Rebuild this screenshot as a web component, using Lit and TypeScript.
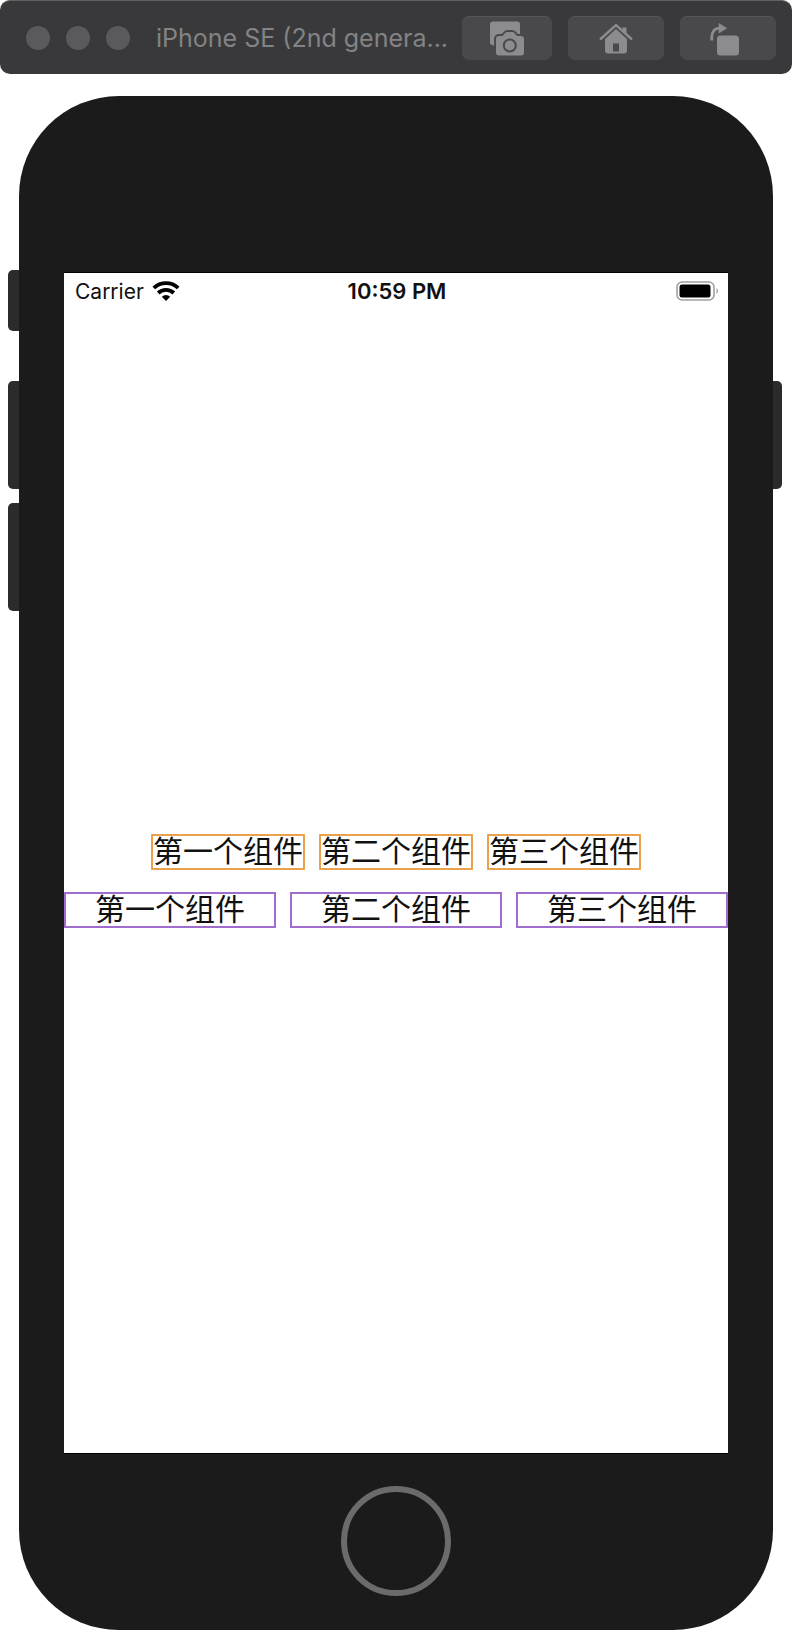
import { LitElement, html, css, svg } from "lit";
import { customElement } from "lit/decorators.js";

const LABELS = ["第一个组件", "第二个组件", "第三个组件"];

const CAMERA_BODY =
  "M10 15h3.500c1.800-1.500 2.400-4 5.300-4h4c2.900 0 3.500 2.500 5.300 4H32a3 3 0 0 1 3 3v13.500a3 3 0 0 1-3 3H10a3 3 0 0 1-3-3V18a3 3 0 0 1 3-3z";

const cameraIcon = svg`
  <svg class="icon" viewBox="0 0 36 36" aria-hidden="true">
    <path d="M4 .5h24a3 3 0 0 1 3 3V16H7v8.500H5.500C2.800 24.500 1 23.500 1 21.500v-18a3 3 0 0 1 3-3z"/>
    <path d=${CAMERA_BODY} stroke="#49494b" stroke-width="4"/>
    <path d=${CAMERA_BODY}/>
    <circle cx="20.800" cy="24.500" r="6" stroke="#49494b" stroke-width="2"/>
  </svg>`;

const homeIcon = svg`
  <svg class="icon" viewBox="0 0 36 36" aria-hidden="true">
    <path d="M24.500 6.500h4v7l-4-3.500z"/>
    <path d="M2 18.500 18 4l16 14.500" fill="none" stroke="currentColor" stroke-width="2.400"/>
    <path fill-rule="evenodd" d="M18 8 29 18v11.500a3 3 0 0 1-3 3H10a3 3 0 0 1-3-3V18zM15 22.500v8h6v-8z"/>
  </svg>`;

const rotateIcon = svg`
  <svg class="icon" viewBox="0 0 36 36" aria-hidden="true">
    <path d="M1.800 19.500C1.300 11 4 7.200 10 7.200" fill="none" stroke="currentColor" stroke-width="2.800"/>
    <path d="M9 2.500 16.700 7.200 9 12z" stroke="currentColor" stroke-width=".6" stroke-linejoin="round"/>
    <rect x="7" y="14.500" width="22" height="20" rx="3.500"/>
  </svg>`;

@customElement("app-root")
export class AppRoot extends LitElement {
  static styles = css`
    :host {
      display: block;
      background: #fff;
      font-family: Inter, "Noto Sans CJK SC", sans-serif;
    }
    .toolbar {
      display: flex;
      align-items: center;
      gap: 16px;
      box-sizing: border-box;
      height: 74px;
      padding: 1px 16px 0 26px;
      border-top: 1px solid #626263;
      border-radius: 10px;
      background: #39393b;
      color: #838385;
    }
    .lights {
      display: flex;
      gap: 16px;
      margin-right: 10px;
    }
    .light {
      width: 24px;
      height: 24px;
      border-radius: 50%;
      background: #5a5a5c;
    }
    .title {
      flex: 1;
      min-width: 0;
      margin: 0;
      font-size: 25px;
      font-weight: 400;
      line-height: 32px;
      white-space: nowrap;
    }
    .tool {
      display: flex;
      align-items: center;
      justify-content: center;
      box-sizing: border-box;
      width: 96px;
      height: 44px;
      padding: 0;
      border: 0;
      border-top: 1px solid #565658;
      border-radius: 7px;
      background: #49494b;
      color: #8c8c8e;
    }
    .tool.narrow {
      width: 90px;
    }
    .icon {
      width: 36px;
      height: 36px;
      fill: currentColor;
    }
    .device {
      display: grid;
      grid-template-columns: 19px 1fr 19px;
      margin-top: 22px;
    }
    .rail {
      display: flex;
      flex-direction: column;
      padding: 174px 0 0 8px;
    }
    .rail.right {
      padding: 285px 10px 0 0;
    }
    .key {
      height: 108px;
      margin-bottom: 14px;
      border-radius: 5px 0 0 5px;
      background: #2b2b2b;
    }
    .key.mute {
      height: 61px;
      margin-bottom: 50px;
    }
    .right .key {
      border-radius: 0 5px 5px 0;
    }
    .body {
      padding: 176px 45px 2px;
      border-radius: 100px;
      background: #1b1b1b;
    }
    .screen {
      display: flex;
      flex-direction: column;
      aspect-ratio: 664 / 1180;
      border: solid #000;
      border-width: 1px 0;
      background: #fff;
      color: #111;
    }
    .status {
      display: grid;
      grid-template-columns: 1fr auto 1fr;
      align-items: center;
      height: 36px;
      padding: 0 9px 0 11px;
      font-size: 21px;
    }
    .carrier {
      display: flex;
      align-items: center;
      gap: 8px;
    }
    .wifi {
      width: 28px;
      height: 20px;
    }
    .time {
      font-size: 22px;
      font-weight: 600;
    }
    .battery {
      justify-self: end;
      width: 43px;
      height: 20px;
    }
    .content {
      display: flex;
      flex: 1;
      flex-direction: column;
      justify-content: center;
      gap: 22px;
    }
    .row {
      display: flex;
      justify-content: center;
      gap: 14px;
    }
    .cell {
      padding-bottom: 2px;
      border: 2px solid #e9a14c;
      font-size: 30px;
      line-height: 30px;
      text-align: center;
      white-space: nowrap;
    }
    .row.fill .cell {
      flex: 1;
      border-color: #a06ccd;
    }
    .chin {
      display: flex;
      align-items: center;
      justify-content: center;
      height: 174px;
    }
    .home {
      box-sizing: border-box;
      width: 110px;
      height: 110px;
      padding: 0;
      border: 6px solid #6b6b6b;
      border-radius: 50%;
      background: none;
    }
  `;

  render() {
    return html`
      <header class="toolbar">
        <div class="lights">
          <span class="light"></span><span class="light"></span><span class="light"></span>
        </div>
        <h1 class="title">iPhone SE (2nd genera...</h1>
        <button class="tool narrow" aria-label="Screenshot">${cameraIcon}</button>
        <button class="tool" aria-label="Home">${homeIcon}</button>
        <button class="tool" aria-label="Rotate">${rotateIcon}</button>
      </header>
      <main class="device">
        <div class="rail">
          <div class="key mute"></div>
          <div class="key"></div>
          <div class="key"></div>
        </div>
        <div class="body">
          <section class="screen">
            <div class="status">
              <span class="carrier">
                Carrier
                <svg class="wifi" viewBox="0 0 28 20" aria-hidden="true">
                  <g fill="none" stroke="#000" stroke-width="3.800">
                    <path d="M1.800 7a17.500 17.500 0 0 1 24.400 0"/>
                    <path d="M6.200 12a11.400 11.400 0 0 1 15.600 0"/>
                  </g>
                  <path d="M14 20l-4.200-4.300a6 6 0 0 1 8.400 0z"/>
                </svg>
              </span>
              <span class="time">10:59 PM</span>
              <svg class="battery" viewBox="0 0 43 20" aria-hidden="true">
                <rect x="1" y="1" width="37" height="18" rx="5" fill="none" stroke="#a0a0a0" stroke-width="1.600"/>
                <rect x="3.500" y="3.500" width="31" height="13" rx="2.500"/>
                <path d="M40.500 7v6c2-1.500 2-4.500 0-6z" fill="#a0a0a0"/>
              </svg>
            </div>
            <div class="content">
              <div class="row">
                ${LABELS.map((label) => html`<div class="cell">${label}</div>`)}
              </div>
              <div class="row fill">
                ${LABELS.map((label) => html`<div class="cell">${label}</div>`)}
              </div>
            </div>
          </section>
          <div class="chin">
            <button class="home" aria-label="Home button"></button>
          </div>
        </div>
        <div class="rail right">
          <div class="key"></div>
        </div>
      </main>
    `;
  }
}
